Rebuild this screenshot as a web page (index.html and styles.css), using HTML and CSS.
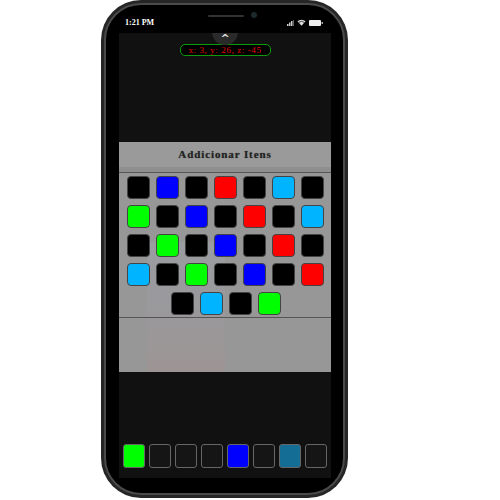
FILE: index.html
```html
<!DOCTYPE html>
<html>
<head>
    <title>Inventario</title>
    <link rel="stylesheet" href="styles.css">
</head>
<body>
    <div class="phone">
        <div class="phone-inner">
            <div class="status-bar">
                <span class="clock">1:21 PM</span>
                <span class="speaker"></span>
                <span class="camera"></span>
                <span class="status-icons">
                    <svg width="7" height="6" viewBox="0 0 7 6"><rect x="0" y="4" width="1.5" height="2" fill="#ccc"/><rect x="2" y="2.5" width="1.5" height="3.5" fill="#ccc"/><rect x="4" y="1" width="1.5" height="5" fill="#ccc"/><rect x="6" y="0" width="1" height="6" fill="#666"/></svg>
                    <svg width="9" height="7" viewBox="0 0 9 7"><path d="M0.5 2.3 A6 6 0 0 1 8.5 2.3 L4.5 6.8 Z" fill="#ddd"/><path d="M1.8 3.4 A4.3 4.3 0 0 1 7.2 3.4" stroke="#000" stroke-width="0.7" fill="none"/></svg>
                    <svg width="14" height="6" viewBox="0 0 14 6"><rect x="0" y="0" width="12" height="6" rx="1" fill="#eee"/><rect x="12.5" y="2" width="1.5" height="2" fill="#aaa"/></svg>
                </span>
            </div>

            <div class="screen">
                <div class="pull-tab">^</div>
                <div class="coords">x: 3, y: 26, z: -45</div>

                <div class="panel">
                    <div class="figure"></div>
                    <div class="panel-title">Addicionar Itens</div>
                    <div class="item-grid">
                        <div class="item black"></div><div class="item blue"></div><div class="item black"></div><div class="item red"></div><div class="item black"></div><div class="item cyan"></div><div class="item black"></div>
                        <div class="item green"></div><div class="item black"></div><div class="item blue"></div><div class="item black"></div><div class="item red"></div><div class="item black"></div><div class="item cyan"></div>
                        <div class="item black"></div><div class="item green"></div><div class="item black"></div><div class="item blue"></div><div class="item black"></div><div class="item red"></div><div class="item black"></div>
                        <div class="item cyan"></div><div class="item black"></div><div class="item green"></div><div class="item black"></div><div class="item blue"></div><div class="item black"></div><div class="item red"></div>
                        <div class="item black"></div><div class="item cyan"></div><div class="item black"></div><div class="item green"></div>
                    </div>
                    <div class="panel-footer"></div>
                </div>

                <div class="tray">
                    <div class="slot green"></div>
                    <div class="slot"></div>
                    <div class="slot"></div>
                    <div class="slot"></div>
                    <div class="slot blue"></div>
                    <div class="slot"></div>
                    <div class="slot teal"></div>
                    <div class="slot"></div>
                </div>
            </div>
        </div>
    </div>
</body>
</html>
```

FILE: styles.css
```css
body {
    margin: 0;
    padding: 0;
    background-color: #fff;
    font-family: "Liberation Serif", serif;
}

.phone {
    width: 247px;
    height: 498px;
    margin-left: 101px;
    padding: 3px;
    box-sizing: border-box;
    background-color: #262626;
    border-radius: 40px;
}

.phone-inner {
    height: 100%;
    box-sizing: border-box;
    padding: 0 12px 15px 13px;
    background-color: #000;
    border: 2px solid #4a4a4a;
    border-radius: 37px;
    display: flex;
    flex-direction: column;
}

.status-bar {
    height: 28px;
    position: relative;
    flex-shrink: 0;
}

.clock {
    position: absolute;
    left: 6px;
    top: 13px;
    color: #fff;
    font-size: 8px;
    font-weight: bold;
}

.speaker {
    position: absolute;
    left: 89px;
    top: 10px;
    width: 36px;
    height: 2px;
    border-radius: 1px;
    background-color: #333;
}

.camera {
    position: absolute;
    left: 132px;
    top: 7px;
    width: 6px;
    height: 6px;
    border-radius: 50%;
    background-color: #1c2a2c;
}

.status-icons {
    position: absolute;
    right: 8px;
    top: 14px;
    display: flex;
    align-items: flex-end;
    gap: 3px;
}

.status-icons svg {
    display: block;
}

.screen {
    flex: 1;
    background-color: #111;
    position: relative;
    overflow: hidden;
    display: flex;
    flex-direction: column;
    align-items: center;
}

.pull-tab {
    position: absolute;
    left: 93px;
    top: -14px;
    width: 26px;
    height: 26px;
    border-radius: 50%;
    background-color: #2a2a2a;
    color: #ddd;
    font-family: "DejaVu Sans", sans-serif;
    font-size: 11px;
    font-weight: bold;
    text-align: center;
    line-height: 40px;
}

.coords {
    margin-top: 11px;
    width: 91px;
    height: 12px;
    box-sizing: border-box;
    border: 1px solid #0a9a0a;
    border-radius: 5px;
    background-color: #000;
    color: #e00000;
    font-size: 9px;
    letter-spacing: 0.6px;
    line-height: 10px;
    text-align: center;
    white-space: nowrap;
}

.panel {
    margin-top: 86px;
    width: 100%;
    height: 230px;
    background-color: #979797;
    position: relative;
    display: flex;
    flex-direction: column;
}

.figure {
    position: absolute;
    left: 28px;
    top: 100px;
    width: 78px;
    height: 130px;
    background: linear-gradient(#9a9fa5, #9b989c 60%, #a09493);
    opacity: 0.7;
}

.panel-title {
    position: relative;
    height: 30px;
    padding-top: 6px;
    box-sizing: border-box;
    text-align: center;
    font-size: 11px;
    font-weight: bold;
    letter-spacing: 0.9px;
    color: #222;
    text-shadow: 0 0 1px #555;
    background-color: #9a9a9a;
    border-bottom: 5px solid #8f8f8f;
}

.item-grid {
    position: relative;
    border-top: 1px solid #555;
    padding: 3px 7px 0 8px;
    height: 141px;
    display: flex;
    flex-wrap: wrap;
    justify-content: center;
    align-content: flex-start;
    gap: 6px;
}

.item {
    width: 23px;
    height: 23px;
    box-sizing: border-box;
    border: 1px solid #444;
    border-radius: 4px;
}

.panel-footer {
    position: relative;
    flex: 1;
    border-top: 1px solid #555;
}

.tray {
    margin-top: 72px;
    width: 100%;
    display: flex;
    justify-content: center;
    gap: 4px;
}

.slot {
    width: 22px;
    height: 24px;
    box-sizing: border-box;
    border: 1px solid #666;
    border-radius: 3px;
    background-color: #151515;
}

.black { background-color: #000; }
.blue { background-color: #0000ff; }
.red { background-color: #ff0000; }
.green { background-color: #00ff00; }
.cyan { background-color: #00b4ff; }
.teal { background-color: #136d94; }
```
